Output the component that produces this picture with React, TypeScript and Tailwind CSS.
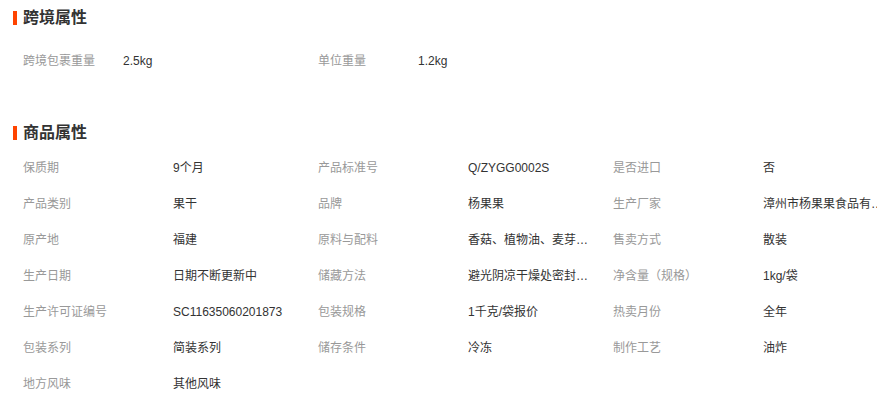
import React from "react";

const font = { fontFamily: '"Microsoft YaHei", "Liberation Sans", "Noto Sans CJK SC", sans-serif' };

function Title({ text }: { text: string }) {
  return (
    <div className="flex h-[34px] items-center pl-[13px]">
      <div className="h-[14px] w-[4px] bg-[#ff4400]" />
      <div className="ml-[6px] text-[16px] font-bold leading-none text-[#333]">{text}</div>
    </div>
  );
}

const attrs: [string, string][] = [
  ["保质期", "9个月"],
  ["产品标准号", "Q/ZYGG0002S"],
  ["是否进口", "否"],
  ["产品类别", "果干"],
  ["品牌", "杨果果"],
  ["生产厂家", "漳州市杨果果食品有限公司"],
  ["原产地", "福建"],
  ["原料与配料", "香菇、植物油、麦芽糊精、白砂糖、食用盐"],
  ["售卖方式", "散装"],
  ["生产日期", "日期不断更新中"],
  ["储藏方法", "避光阴凉干燥处密封保存"],
  ["净含量（规格）", "1kg/袋"],
  ["生产许可证编号", "SC11635060201873"],
  ["包装规格", "1千克/袋报价"],
  ["热卖月份", "全年"],
  ["包装系列", "简装系列"],
  ["储存条件", "冷冻"],
  ["制作工艺", "油炸"],
  ["地方风味", "其他风味"],
];

export default function App() {
  return (
    <div className="h-[399px] w-[877px] overflow-hidden bg-white pt-[1px] text-[12px]" style={font}>
      <Title text="跨境属性" />
      <div className="mt-[8px] flex pl-[23px]">
        <div className="flex h-[36px] w-[295px] items-center">
          <div className="w-[100px] text-[#999]">跨境包裹重量</div>
          <div className="text-[#333]">2.5kg</div>
        </div>
        <div className="flex h-[36px] w-[295px] items-center">
          <div className="w-[100px] text-[#999]">单位重量</div>
          <div className="text-[#333]">1.2kg</div>
        </div>
      </div>
      <div className="mt-[37px]">
        <Title text="商品属性" />
      </div>
      <div className="grid w-[908px] grid-cols-[295px_295px_295px] pl-[23px]">
        {attrs.map(([k, v], i) => (
          <div key={i} className="flex h-[36px] items-center">
            <div className="w-[150px] shrink-0 text-[#999]">{k}</div>
            <div className="w-[124px] overflow-hidden text-ellipsis whitespace-nowrap text-[#333]">{v}</div>
          </div>
        ))}
      </div>
    </div>
  );
}
